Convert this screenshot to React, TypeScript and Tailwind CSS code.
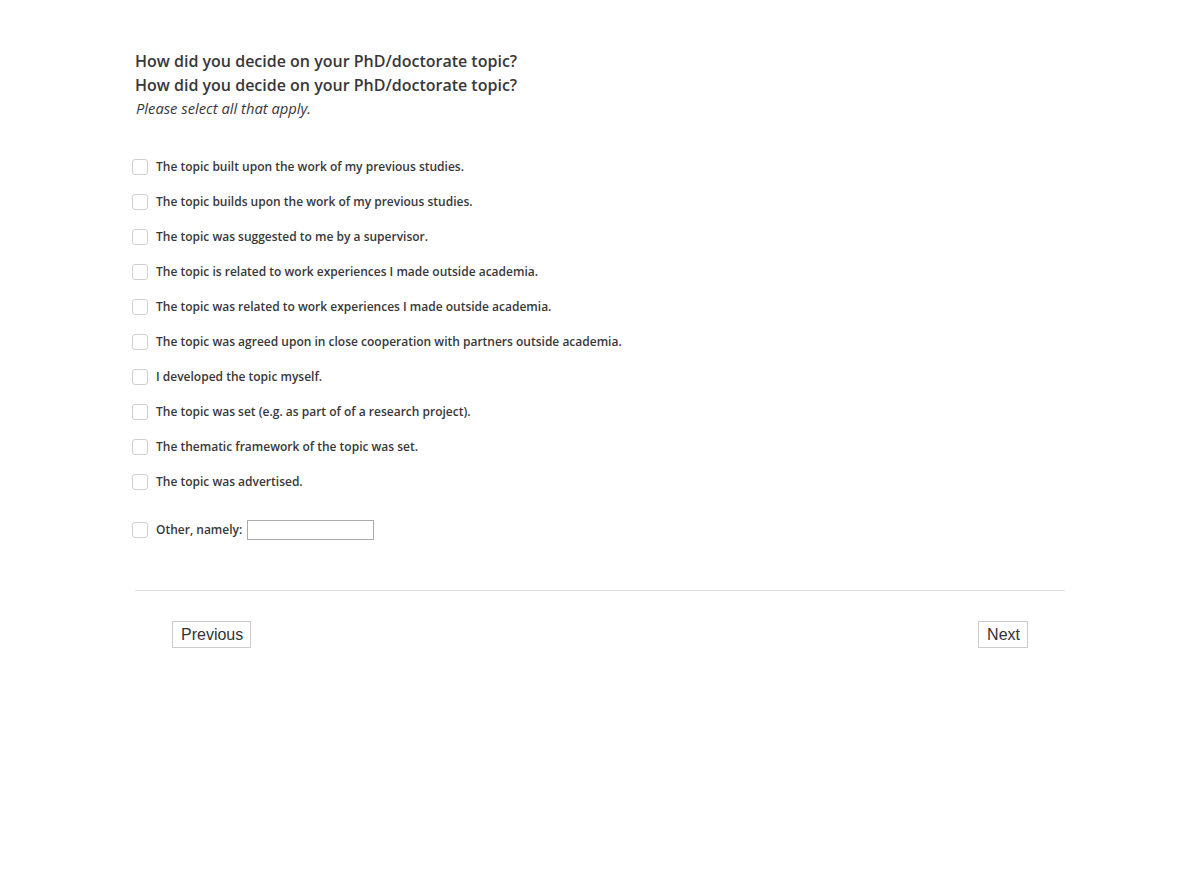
const options = [
  'The topic built upon the work of my previous studies.',
  'The topic builds upon the work of my previous studies.',
  'The topic was suggested to me by a supervisor.',
  'The topic is related to work experiences I made outside academia.',
  'The topic was related to work experiences I made outside academia.',
  'The topic was agreed upon in close cooperation with partners outside academia.',
  'I developed the topic myself.',
  'The topic was set (e.g. as part of of a research project).',
  'The thematic framework of the topic was set.',
  'The topic was advertised.',
]

function Box() {
  return <span className="block h-4 w-4 shrink-0 rounded-[3px] border border-[#cfcfcf] bg-white" />
}

export default function App() {
  return (
    <div className="min-h-screen bg-white font-['Open_Sans',sans-serif] text-[#383838]">
      <div className="mx-auto w-[930px] pt-[49px]">
        <h1 className="text-[16px] font-semibold leading-6">How did you decide on your PhD/doctorate topic?</h1>
        <h2 className="text-[16px] font-semibold leading-6">How did you decide on your PhD/doctorate topic?</h2>
        <p className="pl-px text-[14.75px] italic leading-[22px]">Please select all that apply.</p>

        <div className="mt-[30px]">
          {options.map((o) => (
            <label key={o} className="-ml-[3px] flex h-[35px] items-center gap-2">
              <Box />
              <span className="text-[12px] font-semibold">{o}</span>
            </label>
          ))}
          <label className="-ml-[3px] mt-[13px] flex h-[35px] items-center gap-2">
            <Box />
            <span className="text-[12px] font-semibold">Other, namely:</span>
            <input type="text" className="-ml-[3px] h-5 w-[127px] border border-[#aaa] bg-white" />
          </label>
        </div>

        <hr className="mt-[43px] border-t border-[#ddd]" />

        <div className="flex justify-between px-[37px] pt-[30px]">
          <button className="h-[27px] border border-[#ccc] bg-white pl-2 pr-[7px] font-['Liberation_Sans',sans-serif] text-[16px] text-[#333]">Previous</button>
          <button className="h-[27px] border border-[#ccc] bg-white pl-2 pr-[7px] font-['Liberation_Sans',sans-serif] text-[16px] text-[#333]">Next</button>
        </div>
      </div>
    </div>
  )
}
